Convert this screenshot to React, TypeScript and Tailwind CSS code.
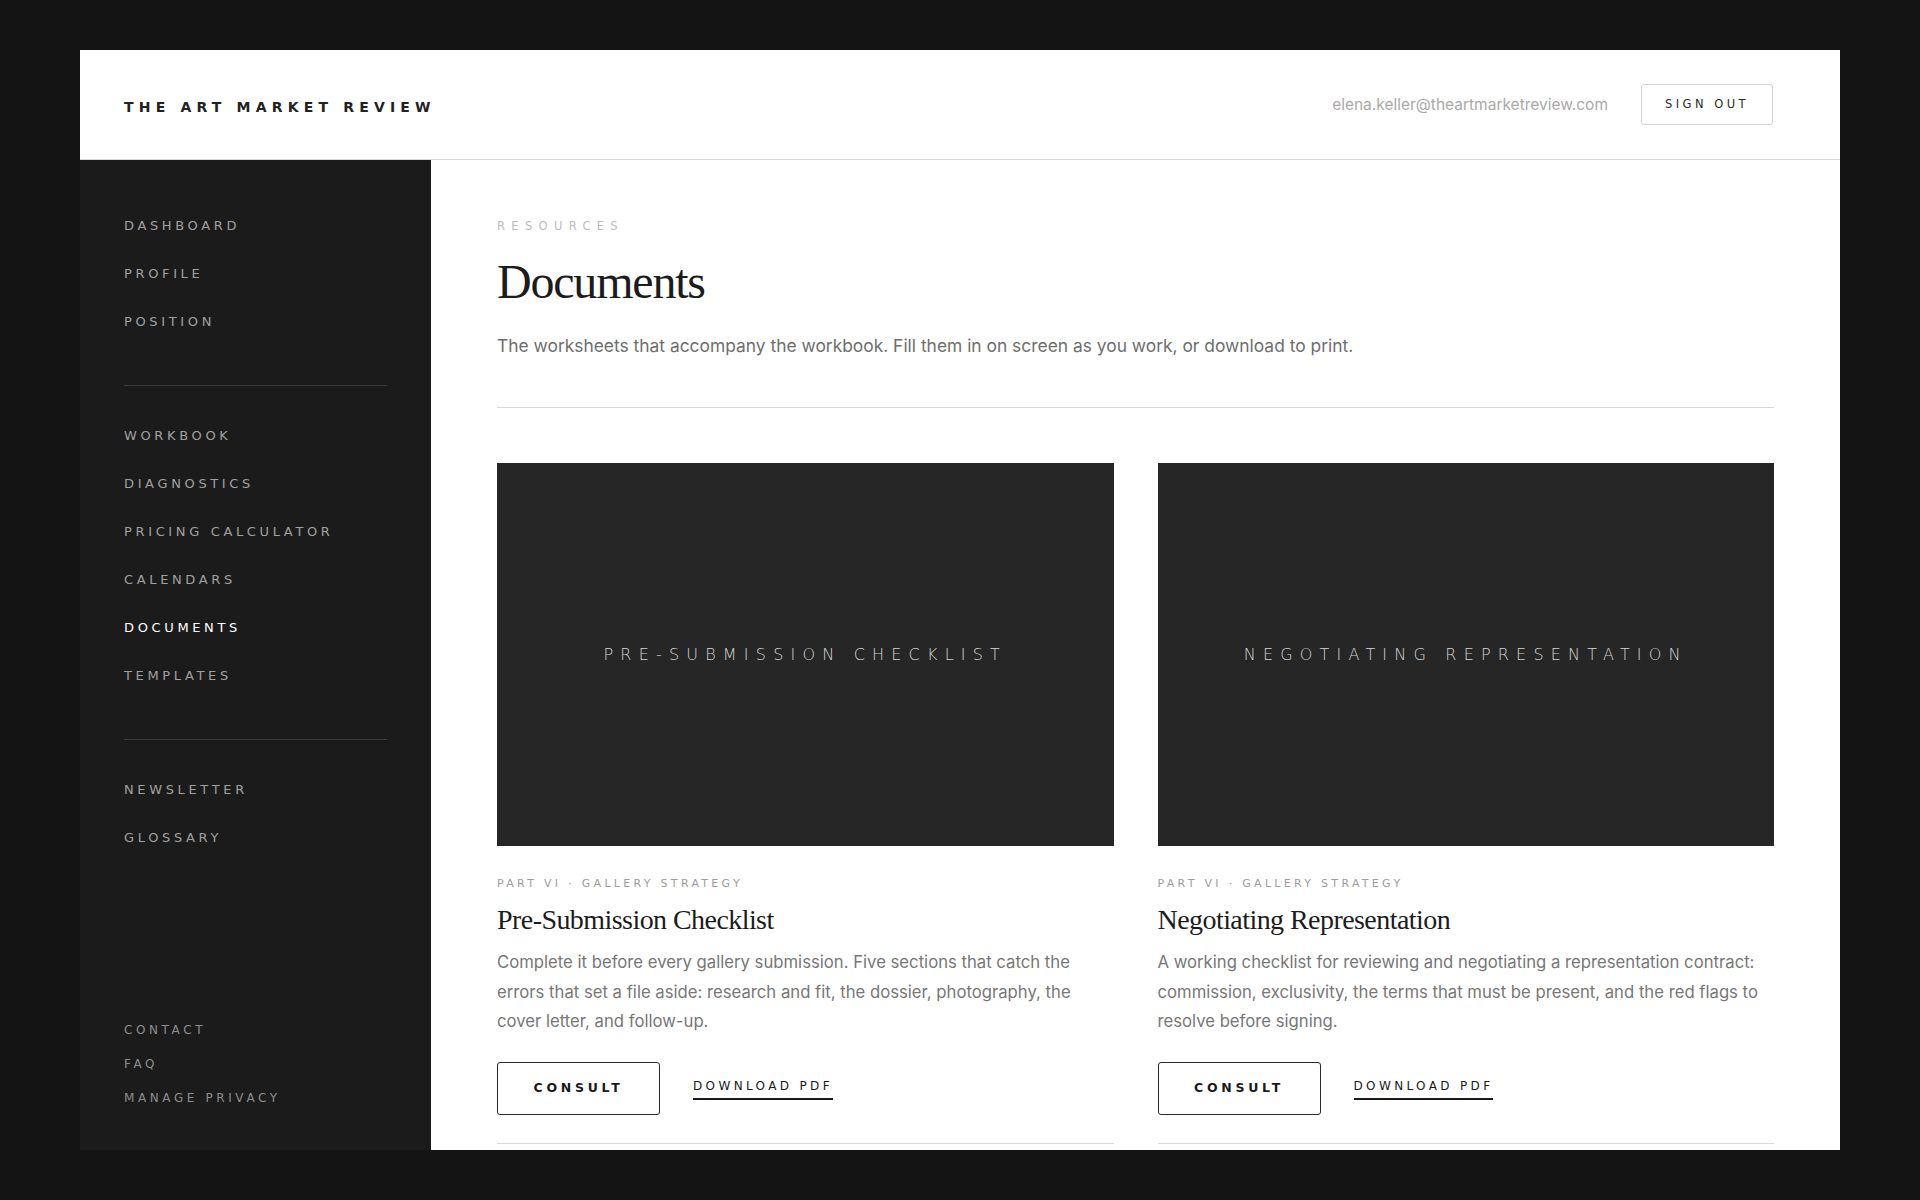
import React from 'react';

const wide = { fontFamily: '"DejaVu Sans", sans-serif' };
const serif = { fontFamily: '"Liberation Serif", "Times New Roman", serif' };
const sans = { fontFamily: 'Inter, "Noto Sans", sans-serif' };

const mainNav = ['Dashboard', 'Profile', 'Position'];
const toolNav = ['Workbook', 'Diagnostics', 'Pricing Calculator', 'Calendars', 'Documents', 'Templates'];
const extraNav = ['Newsletter', 'Glossary'];
const footerNav = ['Contact', 'FAQ', 'Manage Privacy'];

const docs = [
  {
    cover: 'Pre-Submission Checklist',
    part: 'Part VI · Gallery Strategy',
    title: 'Pre-Submission Checklist',
    body: 'Complete it before every gallery submission. Five sections that catch the errors that set a file aside: research and fit, the dossier, photography, the cover letter, and follow-up.',
  },
  {
    cover: 'Negotiating Representation',
    part: 'Part VI · Gallery Strategy',
    title: 'Negotiating Representation',
    body: 'A working checklist for reviewing and negotiating a representation contract: commission, exclusivity, the terms that must be present, and the red flags to resolve before signing.',
  },
];

function NavGroup({ items, active }: { items: string[]; active?: string }) {
  return (
    <div className="flex flex-col gap-8">
      {items.map((item) => (
        <a
          key={item}
          href="#"
          style={wide}
          className={`text-[13px] leading-4 uppercase tracking-[0.28em] ${item === active ? 'text-white' : 'text-[#a0a0a0]'}`}
        >
          {item}
        </a>
      ))}
    </div>
  );
}

function DocCard({ doc }: { doc: (typeof docs)[number] }) {
  return (
    <div className="flex flex-col">
      <div className="h-[383px] bg-[#262626] flex items-center justify-center">
        <span style={wide} className="text-[16px] font-light uppercase tracking-[0.45em] text-[#d4d4d4]">
          {doc.cover}
        </span>
      </div>
      <p style={wide} className="mt-[30px] text-[11px] leading-4 uppercase tracking-[0.3em] text-[#9d9d9d]">
        {doc.part}
      </p>
      <h2 style={serif} className="mt-[12px] text-[28px] leading-[32px] tracking-[-0.02em] text-[#1c1c1c]">
        {doc.title}
      </h2>
      <p style={sans} className="mt-[12px] text-[16.7px] leading-[29.5px] text-[#777777]">
        {doc.body}
      </p>
      <div className="mt-[25px] flex items-center gap-[33px]">
        <button
          style={wide}
          className="w-[163px] h-[53px] border border-[#2a2a2a] rounded-[3px] text-[12.5px] font-bold uppercase tracking-[0.3em] text-[#1a1a1a]"
        >
          Consult
        </button>
        <a
          href="#"
          style={wide}
          className="text-[12px] uppercase tracking-[0.28em] text-[#1a1a1a] border-b-2 border-[#1a1a1a] pb-[3px]"
        >
          Download PDF
        </a>
      </div>
      <div className="mt-[28px] border-t border-[#d9d9d9]" />
    </div>
  );
}

export default function App() {
  return (
    <div className="min-h-screen bg-[#141414] px-[80px] py-[50px]">
      <div className="h-[1100px] flex flex-col overflow-hidden bg-white">
        <header className="h-[110px] shrink-0 flex items-center justify-between pl-[44px] pr-[67px] border-b border-[#d6d6d6]">
          <span style={wide} className="mt-[6px] text-[14px] font-bold uppercase tracking-[0.37em] text-[#222222]">
            The Art Market Review
          </span>
          <div className="flex items-center gap-[33px]">
            <span style={sans} className="text-[15.5px] text-[#a9a9a9]">
              elena.keller@theartmarketreview.com
            </span>
            <button
              style={wide}
              className="w-[132px] h-[41px] border border-[#d4d4d4] rounded-[3px] text-[11.5px] uppercase tracking-[0.3em] text-[#2a2a2a]"
            >
              Sign out
            </button>
          </div>
        </header>

        <div className="flex flex-1 min-h-0">
          <aside className="w-[351px] shrink-0 bg-[#1b1b1b] flex flex-col px-[44px] pt-[58px] pb-[44px]">
            <NavGroup items={mainNav} />
            <div className="mt-[55px] mb-[42px] border-t border-[#3a3a3a]" />
            <NavGroup items={toolNav} active="Documents" />
            <div className="mt-[55px] mb-[42px] border-t border-[#3a3a3a]" />
            <NavGroup items={extraNav} />
            <div className="mt-auto flex flex-col gap-[18px]">
              {footerNav.map((item) => (
                <a key={item} href="#" style={wide} className="text-[12px] leading-4 uppercase tracking-[0.3em] text-[#8e8e8e]">
                  {item}
                </a>
              ))}
            </div>
          </aside>

          <main className="flex-1 min-w-0 overflow-hidden px-[66px] pt-[58px]">
            <p style={wide} className="text-[11.5px] leading-4 uppercase tracking-[0.55em] text-[#bcbcbc]">
              Resources
            </p>
            <h1 style={serif} className="mt-[24px] text-[48px] leading-[48px] tracking-[-0.025em] text-[#1c1c1c]">
              Documents
            </h1>
            <p style={sans} className="mt-[26px] text-[17.4px] leading-7 text-[#6e6e6e]">
              The worksheets that accompany the workbook. Fill them in on screen as you work, or download to print.
            </p>
            <div className="mt-[47px] border-t border-[#d6d6d6]" />
            <div className="mt-[55px] grid grid-cols-2 gap-x-[44px]">
              {docs.map((doc) => (
                <DocCard key={doc.title} doc={doc} />
              ))}
            </div>
          </main>
        </div>
      </div>
    </div>
  );
}
